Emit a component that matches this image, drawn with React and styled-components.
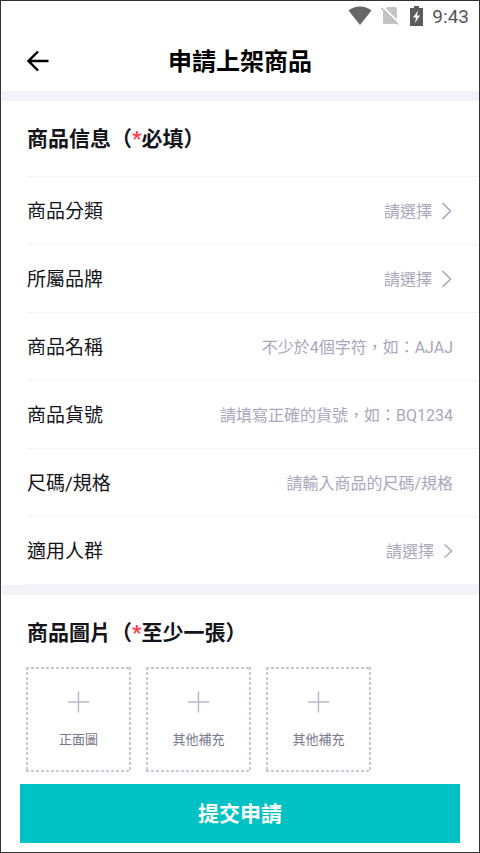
import React, { useState } from "react";
import styled, { createGlobalStyle } from "styled-components";

const fields = [
	{ id: "category", label: "商品分類", type: "select" },
	{ id: "brand", label: "所屬品牌", type: "select" },
	{ id: "name", label: "商品名稱", placeholder: "不少於4個字符，如：AJAJ" },
	{ id: "number", label: "商品貨號", placeholder: "請填寫正確的貨號，如：BQ1234" },
	{ id: "size", label: "尺碼/規格", placeholder: "請輸入商品的尺碼/規格" },
	{ id: "people", label: "適用人群", type: "select", compact: true },
];

const photos = [
	{ id: "front", label: "正面圖" },
	{ id: "extra1", label: "其他補充" },
	{ id: "extra2", label: "其他補充" },
];

function StatusIcons() {
	return (
		<>
			<svg width="24" height="20" viewBox="0 0 24 20">
				<path d="M0.5 4.5C7-0.8 17-0.8 23.5 4.5L12 19Z" fill="#666" />
			</svg>
			<svg width="20" height="20" viewBox="0 0 20 20">
				<path d="M6 1H14.5Q16 1 16 2.5V18H3.5Q2 18 2 16.5V5Z" fill="#c4c4c4" />
				<path d="M1.5 0.5L18.5 17.5" stroke="#fff" strokeWidth="2" />
				<path d="M0.5 2L17 18.5" stroke="#bbb" strokeWidth="1.6" />
			</svg>
			<svg width="13" height="20" viewBox="0 0 13 20">
				<path d="M4 0H9V2H13V20H0V2H4Z" fill="#5c5c5c" />
				<path d="M8 4.5L3 11.5H6L5 17L10 9.5H7Z" fill="#fff" />
			</svg>
		</>
	);
}

function Chevron({ compact }) {
	if (compact) {
		return (
			<svg width="10" height="16" viewBox="0 0 10 16" fill="none">
				<path d="M1.5 1.5L8.5 8L1.5 14.5" stroke="#a9a7bb" strokeWidth="1.4" />
			</svg>
		);
	}
	return (
		<svg width="12" height="18" viewBox="0 0 12 18" fill="none">
			<path d="M1.5 1L9.5 9L1.5 17" stroke="#a9a7bb" strokeWidth="1.6" />
		</svg>
	);
}

function Field({ field, value, onChange }) {
	return (
		<Row>
			<Label htmlFor={field.id}>{field.label}</Label>
			{field.type === "select" ? (
				<SelectHolder>
					<Select id={field.id} value={value} onChange={onChange}>
						<option value="">請選擇</option>
					</Select>
					<Chevron compact={field.compact} />
				</SelectHolder>
			) : (
				<Input
					id={field.id}
					placeholder={field.placeholder}
					value={value}
					onChange={onChange}
				/>
			)}
		</Row>
	);
}

export default function App() {
	const [values, setValues] = useState({});

	function handleChange(id, event) {
		setValues({ ...values, [id]: event.target.value });
	}

	function handleSubmit(event) {
		event.preventDefault();
	}

	return (
		<Page onSubmit={handleSubmit}>
			<GlobalStyle />
			<StatusBar>
				<StatusIcons />
				<Clock>9:43</Clock>
			</StatusBar>
			<Header>
				<BackButton type="button" aria-label="返回">
					<svg width="22" height="22" viewBox="0 0 22 22" fill="none">
						<path
							d="M11 1.5L1.5 11L11 20.5M1.5 11H21.5"
							stroke="#000"
							strokeWidth="2.4"
						/>
					</svg>
				</BackButton>
				<Title>申請上架商品</Title>
			</Header>
			<Band />
			<section>
				<SectionTitle>
					商品信息（<Star>*</Star>必填）
				</SectionTitle>
				<Rows>
					{fields.map((field) => (
						<Field
							key={field.id}
							field={field}
							value={values[field.id] || ""}
							onChange={(event) => handleChange(field.id, event)}
						/>
					))}
				</Rows>
			</section>
			<Band />
			<section>
				<SectionTitle>
					商品圖片（<Star>*</Star>至少一張）
				</SectionTitle>
				<Photos>
					{photos.map((photo) => (
						<PhotoButton key={photo.id} type="button">
							<svg width="22" height="22" viewBox="0 0 22 22">
								<path d="M10.5 0.5V21.5M0 11H21" stroke="#bab6cc" strokeWidth="1.4" />
							</svg>
							{photo.label}
						</PhotoButton>
					))}
				</Photos>
			</section>
			<Submit type="submit">提交申請</Submit>
		</Page>
	);
}

const GlobalStyle = createGlobalStyle`
	* {
		box-sizing: border-box;
	}
	body {
		margin: 0;
		background-color: #ffffff;
	}
	body, button, input, select {
		font-family: Roboto, "Noto Sans CJK TC", sans-serif;
	}
`;

const Page = styled.form`
	display: flex;
	flex-direction: column;
	min-height: 100vh;
	border: 1px solid #333333;
	padding-bottom: 9px;
	background-color: #ffffff;
`;

const StatusBar = styled.div`
	display: flex;
	justify-content: flex-end;
	align-items: center;
	gap: 9px;
	height: 30px;
	padding-right: 10px;
`;

const Clock = styled.span`
	padding-top: 2px;
	color: #555555;
	font-size: 19px;
	line-height: 20px;
`;

const Header = styled.header`
	display: grid;
	grid-template-columns: 60px 1fr 60px;
	align-items: center;
	height: 60px;
`;

const BackButton = styled.button`
	display: flex;
	justify-content: flex-end;
	padding: 0 12px 0 0;
	border: none;
	background: none;
	cursor: pointer;
`;

const Title = styled.h1`
	margin: 0;
	padding-top: 2px;
	color: #000000;
	font-size: 24px;
	font-weight: 700;
	line-height: 32px;
	text-align: center;
`;

const Band = styled.div`
	height: 10px;
	margin-left: 1px;
	background-color: #f3f2f8;
`;

const SectionTitle = styled.h2`
	margin: 0;
	padding: 23px 0 19px 26px;
	color: #14141a;
	font-size: 21px;
	font-weight: 700;
	line-height: 30px;
`;

const Star = styled.span`
	color: #ff3b4e;
`;

const Rows = styled.div`
	margin-top: 3px;
	margin-left: 26px;
	border-bottom: 1px solid #f4f4f7;
`;

const Row = styled.div`
	display: flex;
	align-items: center;
	height: 68px;
	padding-right: 26px;
	border-top: 1px solid #f4f4f7;
`;

const Label = styled.label`
	flex-shrink: 0;
	padding-top: 2px;
	color: #14141a;
	font-size: 19px;
	line-height: 24px;
`;

const SelectHolder = styled.div`
	display: flex;
	flex: 1;
	align-items: center;
	gap: 9px;
`;

const Select = styled.select`
	flex: 1;
	appearance: none;
	padding: 2px 0 0;
	border: none;
	background: none;
	color: #a9a7bb;
	font-size: 16px;
	line-height: 24px;
	text-align: right;
	text-align-last: right;
`;

const Input = styled.input`
	flex: 1;
	min-width: 0;
	padding: 2px 0 0;
	border: none;
	outline: none;
	background: none;
	color: #14141a;
	font-size: 16px;
	line-height: 24px;
	text-align: right;

	&::placeholder {
		color: #a9a7bb;
		opacity: 1;
	}
`;

const Photos = styled.div`
	display: flex;
	gap: 15px;
	padding-left: 25px;
`;

/* short dashes, tighter than a dashed border draws them */
const PhotoButton = styled.button`
	--dash: #cbc7da 3px, transparent 3px;
	display: flex;
	flex-direction: column;
	align-items: center;
	gap: 17px;
	width: 105px;
	height: 105px;
	padding: 24px 0 0;
	border: none;
	background:
		linear-gradient(90deg, var(--dash)) left top / 5px 2px repeat-x,
		linear-gradient(90deg, var(--dash)) left bottom / 5px 2px repeat-x,
		linear-gradient(180deg, var(--dash)) left top / 2px 5px repeat-y,
		linear-gradient(180deg, var(--dash)) right top / 2px 5px repeat-y;
	color: #77758a;
	font-size: 13px;
	line-height: 20px;
	cursor: pointer;
`;

const Submit = styled.button`
	height: 59px;
	margin: 12px 19px 0;
	padding: 0 0 4px;
	border: none;
	background-color: #00c2c4;
	color: #ffffff;
	font-size: 21px;
	font-weight: 700;
	cursor: pointer;
`;
